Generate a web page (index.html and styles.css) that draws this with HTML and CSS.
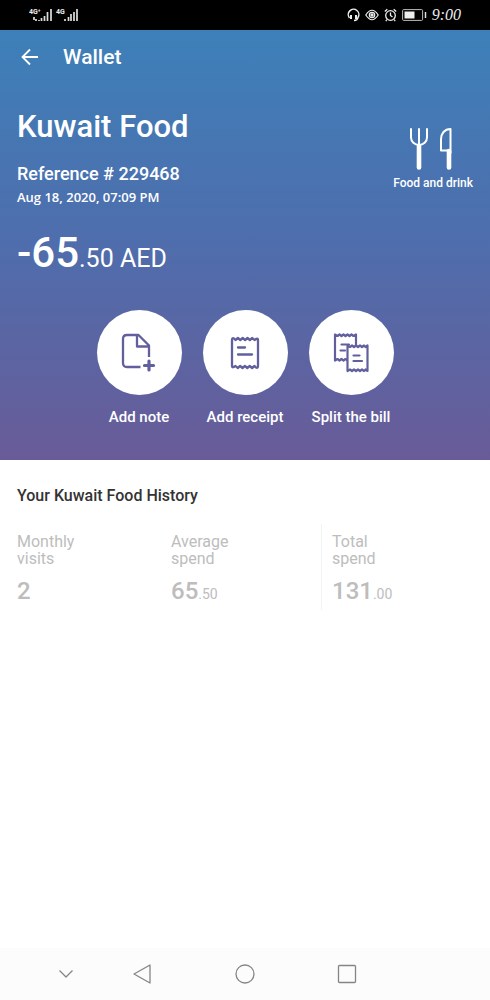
FILE: index.html
```html
<!DOCTYPE html>
<html lang="en">
<head>
<meta charset="utf-8">
<meta name="viewport" content="width=device-width, initial-scale=1">
<title>Wallet</title>
<link rel="stylesheet" href="styles.css">
</head>
<body>
<div class="status">
  <svg class="signal" width="52" height="16" viewBox="0 0 52 16" role="img" aria-label="Mobile signal">
    <text x="0" y="7" class="net">4G⁺</text>
    <text x="27" y="7" class="net">4G</text>
    <path d="M7 14v-2M10 14v-1M12.500 14v-3M15.500 14v-5M18.500 14V5M22 14V2M36 14v-2M39.500 14v-4M42 14V7M45 14V5M48 14V2M5 10v3" stroke="#ddd" stroke-width="1.700"/>
  </svg>
  <div class="indicators">
    <svg width="13" height="14" viewBox="0 0 13 14" fill="none" stroke="#eee" stroke-width="1.500"><path d="M2.500 10A5.300 5.300 0 1 1 11 9.500C10.700 11.500 9 12.500 7 12.500"/><path d="M4 7v4M9 7v4" stroke-width="2"/></svg>
    <svg width="14" height="14" viewBox="0 0 14 14" fill="none" stroke="#eee" stroke-width="1.200"><path d="M.8 7Q7-2.500 13.200 7Q7 16.500.8 7Z"/><circle cx="7" cy="7" r="2.700"/><circle cx="7" cy="7" r="1.100" fill="#eee"/></svg>
    <svg width="13" height="14" viewBox="0 0 13 14" fill="none" stroke="#eee" stroke-width="1.300"><circle cx="6.500" cy="7.500" r="4.800"/><path d="M6.500 4.500v3l2 1.500M.8 3.500l2.500-2.300M12.200 3.500L9.700 1.200M3 11.500l-1.200 1.700M10 11.500l1.200 1.700"/></svg>
    <svg width="25" height="14" viewBox="0 0 25 14"><rect x=".6" y="1.600" width="20" height="10.800" rx="1" fill="none" stroke="#bbb"/><path d="M2.500 3.500h10v7h-10z" fill="#eee"/><path d="M23.500 4v6" stroke="#ddd" stroke-width="1.500"/></svg>
    <span class="clock">9:00</span>
  </div>
</div>

<header class="hero">
  <nav class="topbar">
    <button class="back" type="button" aria-label="Back">
      <svg width="18" height="18" viewBox="0 0 18 18" fill="none" stroke="currentColor" stroke-width="1.800"><path d="M17 9H1.500M9 1.500L1.500 9L9 16.500"/></svg>
    </button>
    <span class="screen-title">Wallet</span>
  </nav>

  <div class="summary">
    <div>
      <h1 class="merchant">Kuwait Food</h1>
      <p class="reference">Reference # 229468</p>
      <p class="date">Aug 18, 2020, 07:09 PM</p>
      <p class="amount"><strong class="whole">-65</strong>.50 AED</p>
    </div>
    <div class="category">
      <svg width="49" height="44" viewBox="0 0 49 44" fill="none" stroke="#fff" stroke-width="2" stroke-linecap="round" stroke-linejoin="round"><path d="M2 2v8.500a8 7.500 0 0 0 16 0V2M10 2v16"/><path d="M10 19v21.500" stroke-width="4.600"/><path d="M40 24v16.500" stroke-width="4.600"/><path d="M41.500 26V2C35.500 2 32 6.500 32 12.500V23.500h8"/></svg>
      <span>Food and drink</span>
    </div>
  </div>

  <div class="actions">
    <button class="action" type="button">
      <span class="disc"><svg width="48" height="48" viewBox="0 0 48 48" fill="none" stroke="#615f9d" stroke-width="2.300" stroke-linejoin="round"><path d="M25.500 38H12Q8 38 8 34V10Q8 6 12 6H23.500L34 16.500V28M22 6.500V17.500H34"/><path d="M29.500 36.500h9M34 32v9" stroke-width="3.200" stroke-linecap="round"/></svg></span>
      <span>Add note</span>
    </button>
    <button class="action" type="button">
      <span class="disc"><svg width="48" height="48" viewBox="0 0 48 48" fill="none" stroke="#615f9d" stroke-width="2.300" stroke-linejoin="round" stroke-linecap="round"><path d="M11 11Q11 8.500 13 9.500l1.500 1.500 2.400-2 2.400 2 2.400-2 2.400 2 2.400-2 2.400 2 2.400-2 2.200 2Q37 8.500 37 11V37Q37 39.500 35 38.500l-1.500-1.500-2.400 2-2.400-2-2.400 2-2.400-2-2.400 2-2.400-2-2.400 2-2.200-2Q11 39.500 11 37Z"/><path d="M17 18.500h7M17 25.500h14"/></svg></span>
      <span>Add receipt</span>
    </button>
    <button class="action" type="button">
      <span class="disc"><svg width="48" height="48" viewBox="0 0 48 48" fill="none" stroke="#615f9d" stroke-width="2.200" stroke-linejoin="round" stroke-linecap="round"><path d="M20 31l-1.500-1-2 1.500-2-1.500-2 1.500-2-1.500-2.500 1.500V5.500l2.500 1.500 2-1.500 2 1.500 2-1.500 2 1.500 2-1.500 2 1.500 2-1.500 2 1.500 2.500-1.500V16M14.500 15.500H22M13.500 21.500H18"/><path d="M20.500 16.500l2.500 1.500 2-1.500 2 1.500 2-1.500 2 1.500 2-1.500 2 1.500 2-1.500 1.500 1.500 2-1.500v25.500l-2-1.500-1.500 1.500-2-1.500-2 1.500-2-1.500-2 1.500-2-1.500-2 1.500-2-1.500-2.500 1.500Z"/><path d="M26.500 26.500h6M26.500 32h8.500"/></svg></span>
      <span>Split the bill</span>
    </button>
  </div>
</header>

<main class="history">
  <h2 class="history-title">Your Kuwait Food History</h2>
  <dl class="stats">
    <div class="stat"><dt>Monthly<br>visits</dt><dd><strong>2</strong></dd></div>
    <div class="stat"><dt>Average<br>spend</dt><dd><strong>65</strong>.50</dd></div>
    <div class="stat stat-total"><dt>Total<br>spend</dt><dd><strong>131</strong>.00</dd></div>
  </dl>
</main>

<footer class="sysnav">
  <button type="button" aria-label="Hide navigation"><svg width="20" height="20" viewBox="0 0 20 20"><path d="M3.500 6.500L10 13l6.500-6.500"/></svg></button>
  <button type="button" aria-label="Back"><svg width="20" height="20" viewBox="0 0 20 20"><path d="M18 1v18L2 10Z"/></svg></button>
  <button type="button" aria-label="Home"><svg width="20" height="20" viewBox="0 0 20 20"><circle cx="10" cy="10" r="9"/></svg></button>
  <button type="button" aria-label="Recent apps"><svg width="20" height="20" viewBox="0 0 20 20"><rect x="1.500" y="1.500" width="17" height="17" rx="1"/></svg></button>
</footer>
</body>
</html>
```
FILE: styles.css
```css
* {
  box-sizing: border-box;
}

body {
  display: flex;
  flex-direction: column;
  min-height: 100vh;
  margin: 0;
  background: #fff;
  font-family: Roboto, "Liberation Sans", sans-serif;
}

h1, h2, p, dl, dd {
  margin: 0;
}

button {
  padding: 0;
  border: 0;
  background: none;
  color: inherit;
  font: inherit;
}

svg {
  display: block;
}

.status {
  display: flex;
  align-items: center;
  justify-content: space-between;
  height: 30px;
  padding: 0 29px;
  background: #000;
  color: #eee;
}

.net {
  fill: #eee;
  font-size: 7px;
  font-weight: 700;
}

.indicators {
  display: flex;
  align-items: center;
  gap: 5px;
}

.clock {
  font: italic 16px/20px "Liberation Serif", serif;
}

.hero {
  padding: 0 17px 33px;
  background: linear-gradient(#3d80b9, #4f6dac 50%, #695b98);
  color: #fff;
}

.topbar {
  display: flex;
  align-items: center;
  gap: 24px;
  height: 53px;
  padding-left: 4px;
}

.screen-title {
  font-size: 21px;
  font-weight: 500;
}

.summary {
  display: flex;
  justify-content: space-between;
  padding-top: 25px;
}

.merchant {
  font-size: 31px;
  font-weight: 500;
  line-height: 38px;
}

.reference {
  margin-top: 17px;
  font-size: 18px;
  font-weight: 500;
  line-height: 22px;
}

.date {
  margin-top: 3px;
  font: 600 13px/18px "Open Sans", sans-serif;
}

.amount {
  margin-top: 23px;
  font-size: 25px;
  line-height: 48px;
}

.whole {
  font-size: 42px;
  font-weight: 500;
}

.category {
  display: flex;
  flex-direction: column;
  align-items: center;
  gap: 4px;
  padding-top: 19px;
  font-size: 12px;
  font-weight: 500;
  line-height: 16px;
}

.actions {
  display: flex;
  justify-content: center;
  gap: 21px;
  margin-top: 27px;
}

.action {
  display: flex;
  flex-direction: column;
  align-items: center;
  gap: 13px;
  width: 85px;
  font-size: 15px;
  font-weight: 500;
  line-height: 19px;
  white-space: nowrap;
}

.disc {
  display: grid;
  place-items: center;
  width: 85px;
  height: 85px;
  border-radius: 50%;
  background: #fff;
}

.history {
  flex: 1;
  padding: 26px 17px;
}

.history-title {
  color: #333;
  font-size: 16px;
  font-weight: 500;
  line-height: 20px;
}

.stats {
  display: grid;
  grid-template-columns: repeat(3, 1fr);
  margin-top: 18px;
  color: #bdbdbd;
}

.stat {
  padding: 9px 2px 0 0;
}

.stat + .stat {
  padding-left: 2px;
}

.stats .stat-total {
  padding-left: 10px;
  border-left: 1px solid #f3f3f3;
}

.stat dt {
  font-size: 16px;
  line-height: 17px;
}

.stat dd {
  margin-top: 8px;
  font-size: 14px;
  line-height: 32px;
}

.stat strong {
  font-size: 24px;
  font-weight: 500;
}

.sysnav {
  display: grid;
  grid-template-columns: 76px 76px 130px 74px;
  justify-content: center;
  height: 52px;
  padding-right: 78px;
  background: #fcfcfc;
}

.sysnav button {
  display: grid;
  place-items: center;
}

.sysnav svg {
  fill: none;
  stroke: #858585;
  stroke-width: 1.300;
  stroke-linejoin: round;
}
```
